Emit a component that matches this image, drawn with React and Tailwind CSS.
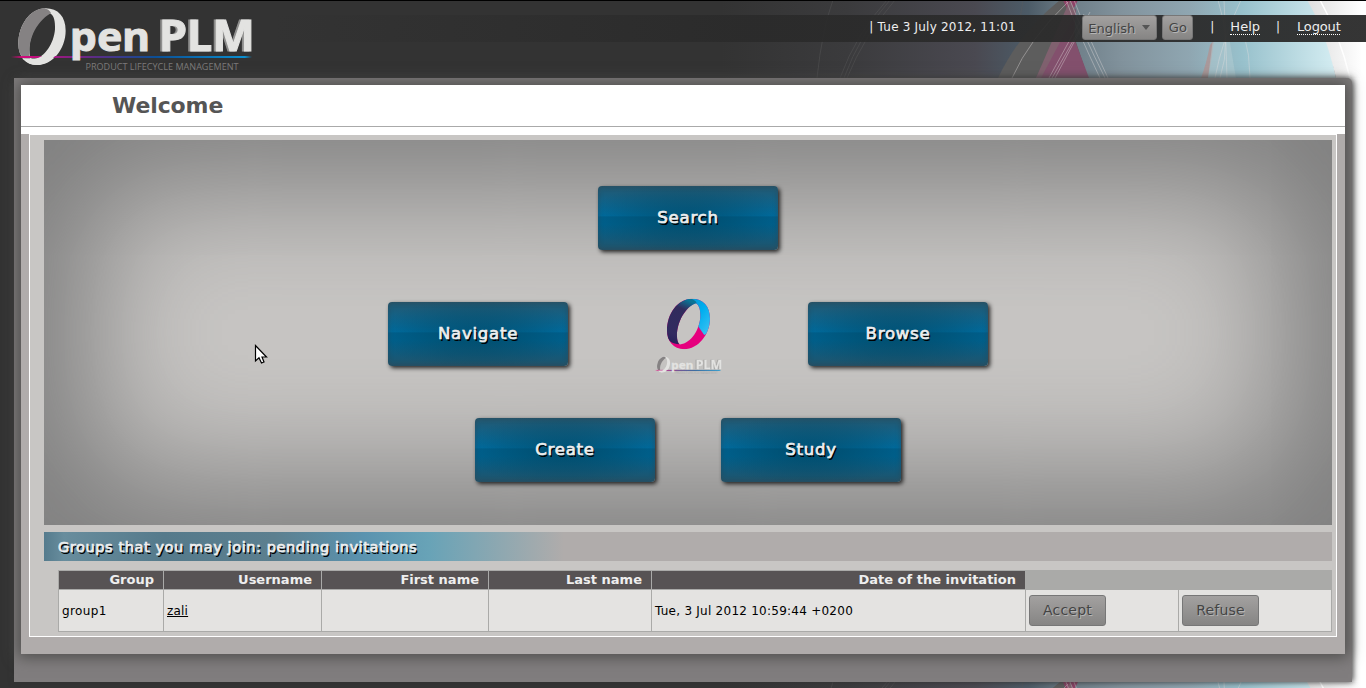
import React from "react";

const streaks = [
  "M833 0 Q822 30 817 78",
  "M887 0 Q856 34 840 78",
  "M890 0 Q860 34 844 78",
  "M895 0 Q864 36 847 78",
  "M1023 0 Q1021 12 1020 20",
];

const brightStreaks = [
  "M1068 2 Q1030 38 1012 78",
  "M1084 14 L1049 78",
  "M1086 18 L1052 78",
  "M1090 12 L1055 78",
  "M1066 0 Q1078 32 1100 78",
  "M1070 0 Q1083 34 1105 78",
  "M1074 0 Q1087 34 1108 78",
  "M1241 0 Q1222 40 1215 78",
  "M1224 0 Q1226 40 1227 78",
  "M1218 0 Q1232 42 1220 78",
  "M1244 34 Q1250 55 1250 78",
];

function Artwork() {
  return (
    <svg className="block h-[78px] w-[1366px] shrink-0" viewBox="0 0 1366 78">
      <defs>
        <linearGradient id="night" gradientUnits="userSpaceOnUse" x1="0" y1="0" x2="1060" y2="0">
          <stop offset="0.68" stopColor="#333333" />
          <stop offset="0.8" stopColor="#3b3b3d" />
          <stop offset="0.92" stopColor="#4a4951" />
          <stop offset="0.97" stopColor="#4c5b67" />
          <stop offset="1" stopColor="#667680" />
        </linearGradient>
        <linearGradient id="sky" gradientUnits="userSpaceOnUse" x1="1070" y1="0" x2="1335" y2="0">
          <stop offset="0" stopColor="#6d7d87" />
          <stop offset="0.2" stopColor="#82939d" />
          <stop offset="0.45" stopColor="#8fa6b1" />
          <stop offset="0.65" stopColor="#98c1cc" />
          <stop offset="1" stopColor="#d4edf2" />
        </linearGradient>
        <linearGradient id="edge" gradientUnits="userSpaceOnUse" x1="1308" y1="0" x2="1362" y2="0">
          <stop offset="0" stopColor="#dedede" />
          <stop offset="1" stopColor="#ffffff" />
        </linearGradient>
      </defs>
      <rect width="1366" height="78" fill="url(#night)" />
      <path d="M1060 0 Q1020 32 998 78 H1120 V0Z" fill="#5d5d5d" />
      <path d="M1070 0 H1320 L1336 78 H1088 L1076 42Z" fill="url(#sky)" />
      <path d="M1076 8 Q1055 40 1036 78 H1089 L1074 38Z" fill="#83506d" />
      <path d="M1063 0 H1078 L1070 16Z" fill="#8d4267" />
      <path d="M1070 0 L1036 78 H1041 L1076 12Z" fill="#80616f" />
      <path d="M1210 45 Q1206 65 1201 78 H1208 Q1212 58 1214 40Z" fill="#aa999b" />
      <path d="M1214 30 H1228 Q1232 55 1236 78 H1208Z" fill="#b3cdd4" opacity="0.5" />
      <path d="M1307 0 Q1325 30 1336 78 H1366 V0Z" fill="url(#edge)" />
      <path d="M1320 0 Q1340 36 1350 78" fill="none" stroke="#ffffff" strokeWidth="1.5" />
      {streaks.map((d) => (
        <path key={d} d={d} fill="none" stroke="#5c5c5c" strokeOpacity="0.4" />
      ))}
      {brightStreaks.map((d) => (
        <path key={d} d={d} fill="none" stroke="#e3dede" strokeOpacity="0.4" />
      ))}
    </svg>
  );
}

const RING =
  "M55 132C55 76 90 25 137 25C174 25 197 50 197 92C197 146 158 195 112 195C76 195 55 168 55 132ZM88 150C88 102 117 52 150 40C162 46 166 64 165 88C162 128 136 174 98 179C91 175 88 165 88 150Z";
const RING_SHADE =
  "M133 25C88 27 55 78 55 132C55 152 61 167 72 176L91 178C80 128 104 68 153 39C149 31 142 27 133 25Z";

function Wordmark({ light, shade, caption, ruleHeight }) {
  return (
    <>
      <g transform="scale(0.3333)">
        <path d={RING} fill={light} fillRule="evenodd" />
        <path d={RING_SHADE} fill={shade} />
      </g>
      <rect x="11" y="56" width="241" height={ruleHeight} fill="url(#rule)" />
      <path d="M37 58.500Q48 54 55 44L62 46Q56 57 48 62Q42 65 36 65Q29 65 24 60L22 58.500Z" fill={light} />
      <g fontFamily="'Noto Sans', 'Open Sans', sans-serif" fontWeight="700" fill={light} stroke={light} strokeWidth="1">
        <text x="70" y="51" fontSize="40" textLength="80" lengthAdjust="spacingAndGlyphs">pen</text>
        <text x="159" y="51" fontSize="43" textLength="96" lengthAdjust="spacingAndGlyphs" className="[filter:drop-shadow(-2px_0_0_#8f8f8e)]">PLM</text>
      </g>
      <text x="85.500" y="69.500" fontSize="9.500" fontFamily="'Open Sans', sans-serif" textLength="153" lengthAdjust="spacingAndGlyphs" fill={caption}>
        PRODUCT LIFECYCLE MANAGEMENT
      </text>
    </>
  );
}

function BrandLogo() {
  return (
    <svg className="ml-[10px] mt-[5px] block h-[70px] w-[250px]" viewBox="10 5 250 70">
      <defs>
        <linearGradient id="rule" gradientUnits="userSpaceOnUse" x1="11" y1="0" x2="252" y2="0">
          <stop offset="0" stopColor="#e6007e" stopOpacity="0" />
          <stop offset="0.05" stopColor="#d4087c" />
          <stop offset="0.35" stopColor="#5b2c86" />
          <stop offset="0.6" stopColor="#0b4f95" />
          <stop offset="0.97" stopColor="#0b8fd0" />
          <stop offset="1" stopColor="#0b8fd0" stopOpacity="0" />
        </linearGradient>
      </defs>
      <Wordmark light="#e3e3e1" shade="#858283" caption="#7b7979" ruleHeight="2" />
    </svg>
  );
}

function CenterLogo() {
  return (
    <svg className="block h-[80px] w-[70px]" viewBox="653 294.500 70 80">
      <defs>
        <clipPath id="ringClip">
          <path d={RING} clipRule="evenodd" />
        </clipPath>
        <linearGradient id="cyanFade" x1="0" y1="0" x2="1" y2="1">
          <stop offset="0" stopColor="#0b8fc9" />
          <stop offset="0.5" stopColor="#00aeef" />
          <stop offset="1" stopColor="#45c4f2" />
        </linearGradient>
        <linearGradient id="navyFade" x1="0.6" y1="0" x2="0.3" y2="1">
          <stop offset="0" stopColor="#0a7496" />
          <stop offset="0.22" stopColor="#312b5c" />
          <stop offset="0.8" stopColor="#322a60" />
          <stop offset="1" stopColor="#28215a" />
        </linearGradient>
      </defs>
      <g transform="translate(650.300 291.800) scale(0.303 0.297)">
        <g clipPath="url(#ringClip)">
          <rect x="50" y="20" width="160" height="180" fill="#e6007e" />
          <path d="M115 20H200V135L178 147L158 118Z" fill="url(#cyanFade)" />
          <path d="M133 25C88 27 50 78 50 132C52 162 66 176 95 178C80 128 104 68 153 39C149 31 142 27 133 25Z" fill="url(#navyFade)" />
        </g>
      </g>
      <g transform="translate(652 355) scale(0.275)">
        <Wordmark light="#e3e3e1" shade="#858283" caption="#b0aeae" ruleHeight="3" />
      </g>
    </svg>
  );
}

function Tile({ children }) {
  return (
    <button className="flex h-[64px] w-[180px] items-center justify-center rounded-[4px] bg-[radial-gradient(ellipse_at_center,rgba(0,55,75,0.5)_0%,rgba(0,65,90,0.3)_45%,rgba(0,70,100,0)_80%),linear-gradient(to_bottom,#24576f_0%,#006ea2_47%,#00618f_48%,#00628f_60%,#22536a_100%)] pt-px text-[16.500px] font-medium tracking-[0.780px] text-[#eeeeee] shadow-[2px_2px_4px_#222222,inset_0_0_5px_rgba(50,70,80,0.6)] [-webkit-text-stroke:0.700px_#eeeeee] [text-shadow:1.500px_1.500px_0_#000000]">
      {children}
    </button>
  );
}

function GrayButton({ children, className }) {
  return (
    <button
      className={
        "flex items-center rounded-[3px] border border-[#777777] bg-linear-to-b from-[#a3a1a0] to-[#868584] text-[#444444] [text-shadow:1px_1px_0_#b5b5b5] " +
        className
      }
    >
      {children}
    </button>
  );
}

function Header() {
  return (
    <header className="relative flex h-[78px] justify-between">
      <BrandLogo />
      <div className="absolute left-0 top-[15px] -z-10 h-[27px] w-full bg-linear-to-r from-[#2a2a2a]/0 from-20% via-[#2a2a2a]/90 via-55% to-[#2a2a2a]/95" />
      <div className="mt-[15px] flex h-[27px] items-start pr-[25px] text-[12px] text-[#eeeeee]">
        <span className="mt-[3px] w-[213px] whitespace-pre leading-[18px] tracking-[0.200px]">| Tue 3 July 2012, 11:01</span>
        <GrayButton className="h-[25px] w-[75px] justify-between pl-[5px] pr-[6px] pt-[2px] text-[13px]">
          English
          <svg className="mb-[3px] h-[5px] w-[8px]" viewBox="0 0 8 5">
            <path d="M0 0H8L4 5Z" fill="#555555" />
          </svg>
        </GrayButton>
        <GrayButton className="ml-[5px] h-[25px] w-[31px] justify-center text-[13px]">Go</GrayButton>
        <span className="ml-[17px] mt-[3px] w-[20px] leading-[18px]">|</span>
        <a className="mt-[5px] h-[15px] border-b border-dotted border-white text-[13px] leading-[14px]">Help</a>
        <span className="ml-[16px] mt-[3px] w-[21px] leading-[18px]">|</span>
        <a className="mr-px mt-[5px] h-[15px] w-[43px] border-b border-dotted border-white text-[13px] leading-[14px] tracking-[-0.150px]">Logout</a>
      </div>
    </header>
  );
}

function Hero() {
  return (
    <section className="flex h-[385px] flex-col items-center gap-[52px] bg-[#c8c6c4] pt-[46px] shadow-[inset_0_0_130px_48px_#7d7d7d]">
      <Tile>Search</Tile>
      <div className="flex h-[64px] w-[600px] items-center justify-between">
        <Tile>Navigate</Tile>
        <CenterLogo />
        <Tile>Browse</Tile>
      </div>
      <div className="flex gap-[66px]">
        <Tile>Create</Tile>
        <Tile>Study</Tile>
      </div>
    </section>
  );
}

function Invitations() {
  const th = "border-r border-[#aaaaa8] bg-[#575354] pr-[9px] text-right text-[13px] font-bold leading-[17px] text-[#eeeeee]";
  const td = "flex items-center border-r border-t border-[#aaaaa8] bg-[#e4e3e1] pl-[3px] text-[12px] text-black";
  return (
    <div className="ml-[14px] mt-[9px] grid h-[62px] grid-cols-[105px_158px_167px_163px_374px_153px_153px] grid-rows-[18px_42px] border-b border-l border-t border-[#aaaaa8]">
      <div className={th}>Group</div>
      <div className={th}>Username</div>
      <div className={th}>First name</div>
      <div className={th}>Last name</div>
      <div className={th}>Date of the invitation</div>
      <div className="col-span-2 bg-[#aaaaa8]" />
      <div className={td + " tracking-[0.400px]"}>group1</div>
      <div className={td}>
        <a className="tracking-[0.200px] underline">zali</a>
      </div>
      <div className={td} />
      <div className={td} />
      <div className={td + " tracking-[0.250px]"}>Tue, 3 Jul 2012 10:59:44 +0200</div>
      <div className={td}>
        <GrayButton className="h-[31px] w-[77px] justify-center pb-px text-[14px] tracking-[0.200px]">Accept</GrayButton>
      </div>
      <div className={td}>
        <GrayButton className="h-[31px] w-[77px] justify-center pb-px text-[14px] tracking-[0.200px]">Refuse</GrayButton>
      </div>
    </div>
  );
}

export default function App() {
  return (
    <div className="relative isolate h-[688px] w-[1366px] overflow-hidden bg-[#333333] font-['DejaVu_Sans',sans-serif]">
      <div className="absolute inset-0 -z-20 flex flex-col justify-between">
        <Artwork />
        <div className="ml-[1345px] flex-1 bg-white" />
        <div className="h-[6px] overflow-hidden">
          <Artwork />
        </div>
      </div>
      <div className="absolute left-0 top-0 h-px w-full bg-black" />
      <Header />
      <main className="ml-[14px] h-[604px] w-[1338px] rounded-tr-[5px] bg-[#807d7e] p-[7px] shadow-[1px_0_6px_#333333]">
        <div className="h-[569px] bg-[#b0acab] shadow-[0_0_14px_3px_#4d4d4b]">
          <div className="h-[49px] bg-white">
            <h1 className="h-[42px] border-b border-[#aaaaaa] pl-[91px] text-[22px] font-bold leading-[41px] tracking-[-0.100px] text-[#555555]">Welcome</h1>
          </div>
          <div className="mx-[8px] h-[503px] border border-white bg-[#c8c6c4] pl-[14px] pr-[4px] pt-[5px]">
            <Hero />
            <h2 className="mt-[7px] h-[29px] bg-[#b0acab] bg-[linear-gradient(to_right,#557b8d_0,#688d9d_20px,#557a8b_120px,#5c7f8f_230px,#5b93af_320px,#68a3b7_385px,#68a3b700_520px)] pl-[14px] text-[14.500px] font-medium leading-[31px] tracking-[0.590px] text-[#eeeeee] [-webkit-text-stroke:0.700px_#eeeeee] [text-shadow:1.500px_1.500px_0_#000000]">
              Groups that you may join: pending invitations
            </h2>
            <Invitations />
          </div>
        </div>
      </main>
      <svg className="absolute left-[254px] top-[344px] h-[21px] w-[14px]" viewBox="0 0 14 21">
        <path d="M1.500 1.500V17L5 13.800L7.500 19L10 18L8 13H12.500Z" fill="#ffffff" stroke="#000000" strokeWidth="1.200" />
      </svg>
    </div>
  );
}
